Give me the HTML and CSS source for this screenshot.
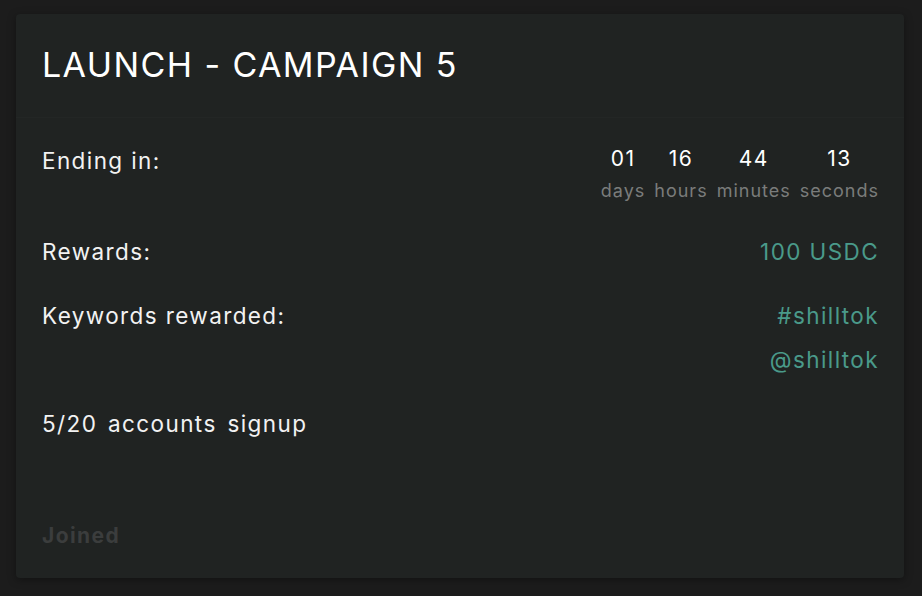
FILE: index.html
```html
<!DOCTYPE html>
<html>
<head>
<meta charset="utf-8">
<link rel="stylesheet" href="styles.css">
</head>
<body>
<div class="card">
  <div class="card-header">
    <h1 class="title">LAUNCH - CAMPAIGN 5</h1>
  </div>
  <div class="card-body">
    <div class="row row-ending">
      <div class="label">Ending in:</div>
      <div class="countdown">
        <div class="unit"><span class="num">01</span><span class="cap">days</span></div>
        <div class="unit"><span class="num">16</span><span class="cap">hours</span></div>
        <div class="unit"><span class="num">44</span><span class="cap">minutes</span></div>
        <div class="unit"><span class="num">13</span><span class="cap">seconds</span></div>
      </div>
    </div>
    <div class="row row-rewards">
      <div class="label">Rewards:</div>
      <div class="value">100 USDC</div>
    </div>
    <div class="row row-keywords">
      <div class="label">Keywords rewarded:</div>
      <div class="values">
        <div class="value">#shilltok</div>
        <div class="value">@shilltok</div>
      </div>
    </div>
    <div class="signup">5/20 accounts signup</div>
    <div class="joined">Joined</div>
  </div>
</div>
</body>
</html>
```
FILE: styles.css
```css
html, body {
  margin: 0;
  padding: 0;
}
body {
  background: #1c1c1c;
  width: 922px;
  height: 596px;
  box-sizing: border-box;
  padding: 14px 18px 18px 16px;
  font-family: "Inter", "Noto Sans", sans-serif;
  color: #f2f2f2;
}
.card {
  background: #202322;
  border-radius: 4px;
  height: 564px;
  box-shadow: 0 2px 8px rgba(0,0,0,0.35);
  display: flex;
  flex-direction: column;
}
.card-header {
  height: 103px;
  border-bottom: 1px solid #232625;
  padding: 0 26px;
  display: flex;
  align-items: center;
}
.title {
  margin: 0;
  font-weight: 400;
  font-size: 34px;
  letter-spacing: 1.4px;
  color: #ffffff;
  padding-bottom: 2px;
}
.card-body {
  flex: 1;
  display: flex;
  flex-direction: column;
  padding: 0 26px;
  font-size: 22.5px;
  letter-spacing: 1.4px;
}
.row {
  display: flex;
  justify-content: space-between;
  align-items: flex-start;
}
.row-ending {
  margin-top: 23px;
}
.label {
  line-height: 40px;
}
.countdown {
  display: flex;
  gap: 9px;
  margin-top: 3px;
  margin-right: -1px;
}
.unit {
  display: flex;
  flex-direction: column;
  align-items: center;
}
.num {
  font-size: 21px;
  line-height: 30px;
  color: #ffffff;
}
.cap {
  font-size: 18px;
  letter-spacing: 1px;
  line-height: 34px;
  color: #7a7c7b;
}
.row-rewards {
  margin-top: 24px;
}
.value {
  color: #4a9a8a;
  line-height: 40px;
  margin-right: -1px;
}
.row-keywords {
  margin-top: 24px;
}
.values {
  display: flex;
  flex-direction: column;
  align-items: flex-end;
  gap: 4px;
}
.signup {
  margin-top: 24px;
  line-height: 40px;
  word-spacing: 3px;
}
.joined {
  margin-top: auto;
  margin-bottom: 22px;
  font-weight: 700;
  font-size: 21px;
  color: #3b3d3d;
  line-height: 40px;
}
```
